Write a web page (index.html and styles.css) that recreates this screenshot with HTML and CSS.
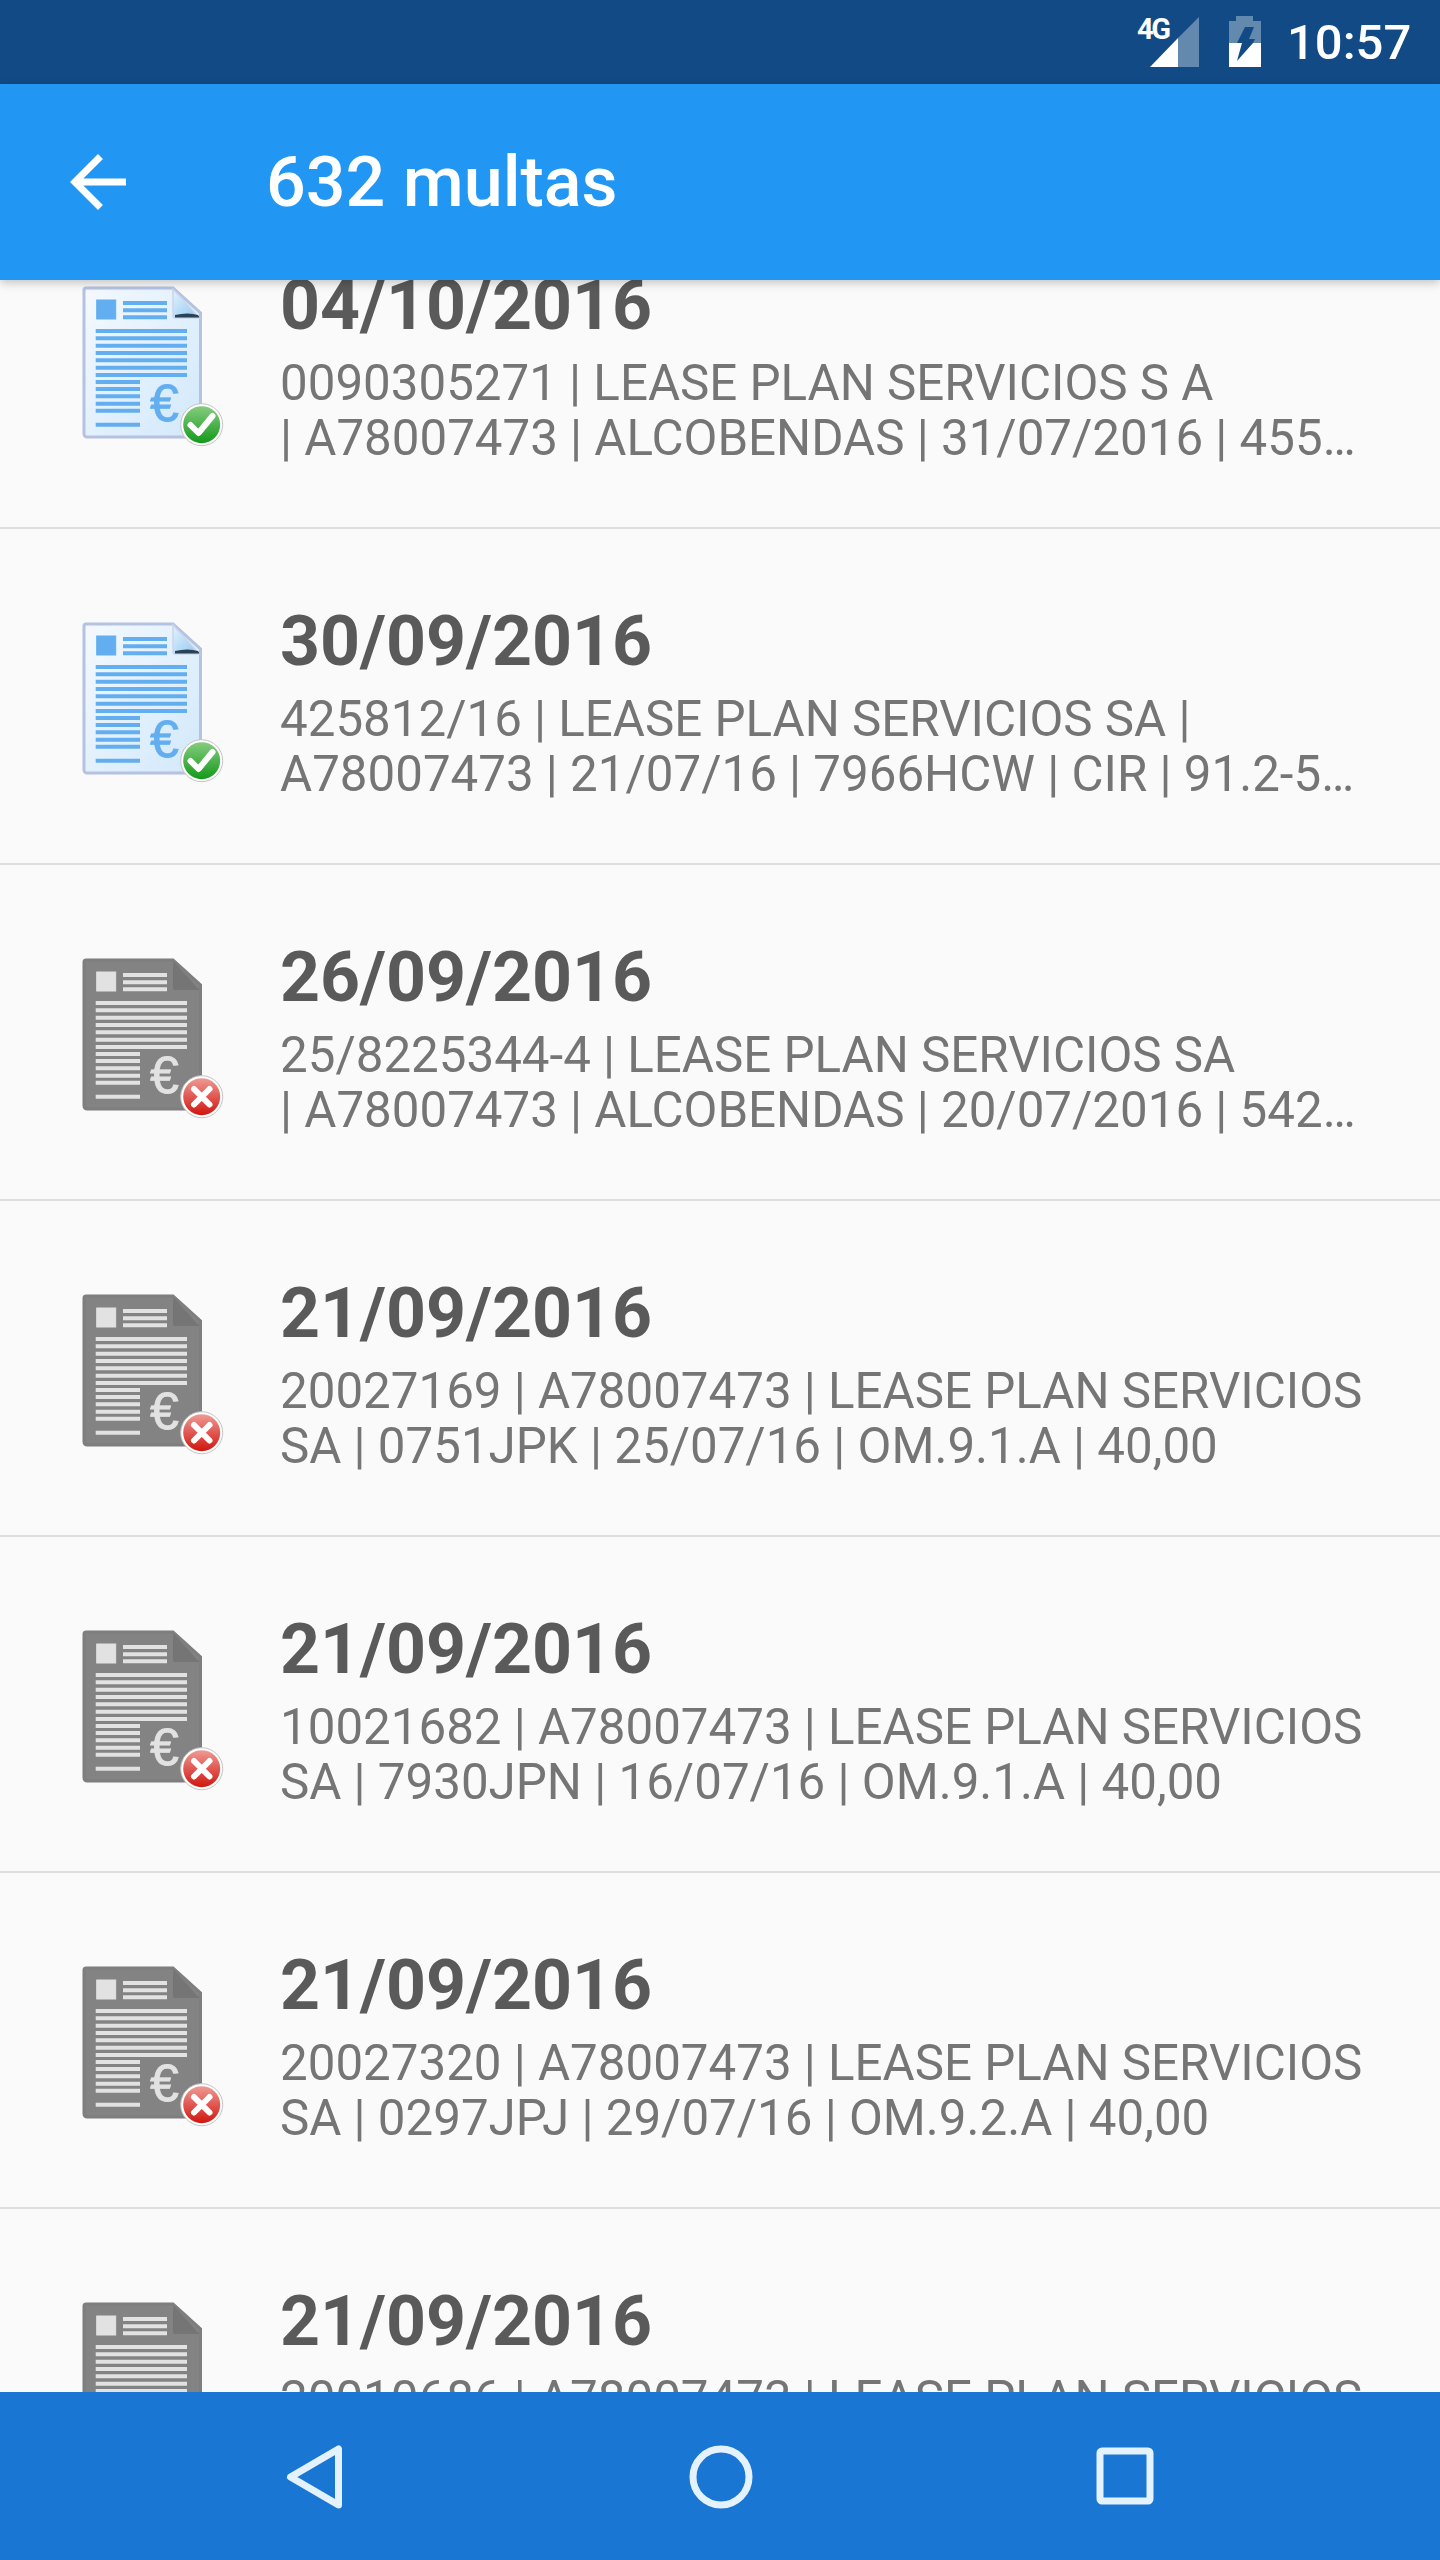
FILE: index.html
```html
<!DOCTYPE html>
<html lang="es">
<head>
<meta charset="utf-8">
<title>632 multas</title>
<link rel="stylesheet" href="styles.css">
</head>
<body>
<svg class="defs" width="0" height="0" aria-hidden="true">
  <defs>
    <linearGradient id="paper" x1="0" y1="0" x2="1" y2="1">
      <stop offset="0" stop-color="#f4f9fe"/><stop offset="1" stop-color="#d2e8fb"/>
    </linearGradient>
    <linearGradient id="fold" x1="0" y1="0" x2="1" y2="1">
      <stop offset="0" stop-color="#e4f3fd"/><stop offset="1" stop-color="#8fc6f0"/>
    </linearGradient>
    <linearGradient id="green" x1="0" y1="0" x2="0" y2="1">
      <stop offset="0" stop-color="#86cc7f"/><stop offset="1" stop-color="#139a1a"/>
    </linearGradient>
    <linearGradient id="red" x1="0" y1="0" x2="0" y2="1">
      <stop offset="0" stop-color="#f09a94"/><stop offset="1" stop-color="#d0160f"/>
    </linearGradient>
    <filter id="soft"><feGaussianBlur stdDeviation="0.6"/></filter>
    <symbol id="lines" viewBox="0 0 145 165">
      <rect x="16.7" y="16" width="19" height="19"/>
      <path class="bars bars-head" d="M43 19H87M43 26.3H87M43 33.3H87"/>
      <path class="bars" d="M15.7 47H107M15.7 54.3H107M15.7 61.7H107M15.7 69H107M15.7 76.3H107M15.7 83.7H107M15.7 91H107M15.7 98H60M15.7 105H60M15.7 112.3H60M15.7 119.7H60M15.7 126.7H60M15.7 140.7H60"/>
    </symbol>
    <symbol id="doc-ok" viewBox="0 0 145 165">
      <g filter="url(#soft)">
        <path class="ok-paper" d="M6 4H93L120.500 29V150a3 3 0 0 1-3 3H7a3 3 0 0 1-3-3V6a2 2 0 0 1 2-2Z"/>
        <path class="ok-fold" d="M93 5V32a2 2 0 0 0 2 2H119.500Z"/>
        <path class="ok-crease" d="M95 31Q108 28 118 31L119.500 33.500H95Z"/>
        <use href="#lines" class="ok-lines" width="145" height="165"/>
      </g>
      <text class="euro ok-euro" x="70" y="137">€</text>
      <circle class="ring" cx="121.7" cy="140.7" r="21"/>
      <circle cx="121.7" cy="140.7" r="18.500" fill="url(#green)"/>
      <path class="mark mark-ok" d="M110.500 141l8 8 14-17"/>
    </symbol>
    <symbol id="doc-no" viewBox="0 0 145 165">
      <g filter="url(#soft)">
        <path class="no-paper" d="M6 4H93L120.500 29V150a3 3 0 0 1-3 3H7a3 3 0 0 1-3-3V6a2 2 0 0 1 2-2Z"/>
        <path class="no-fold" d="M93 5V32a2 2 0 0 0 2 2H119.500Z"/>
        <use href="#lines" class="no-lines" width="145" height="165"/>
      </g>
      <text class="euro no-euro" x="70" y="137">€</text>
      <circle class="ring" cx="121.7" cy="140.7" r="21"/>
      <circle cx="121.7" cy="140.7" r="18.500" fill="url(#red)"/>
      <path class="mark" d="M114 133l15.500 15.500M129.500 133L114 148.500"/>
    </symbol>
  </defs>
</svg>

<div class="screen">
  <header class="status">
    <span class="net">4G</span>
    <svg class="signal" width="50" height="50" viewBox="0 0 50 50" aria-hidden="true">
      <path class="dim" d="M50 0V50H29V21Z"/>
      <path class="full" d="M29 21V50H1Z"/>
    </svg>
    <svg class="battery" width="34" height="52" viewBox="0 0 34 52" aria-hidden="true">
      <path class="dim" d="M8 0H25V5H33V27H1V5H8Z"/>
      <path class="full" d="M1 27H33V51H1Z"/>
      <path class="bolt-top" d="M17 11H26L21 23H27L25 27H9Z"/>
      <path class="bolt-bottom" d="M11 27H25L9 45L14 27Z"/>
    </svg>
    <span class="clock">10:57</span>
  </header>

  <div class="appbar">
    <svg class="back" width="84" height="84" viewBox="0 0 24 24" aria-hidden="true">
      <path d="M20 11H7.830l5.590-5.590L12 4l-8 8 8 8 1.410-1.410L7.830 13H20v-2z"/>
    </svg>
    <h1 class="title">632 multas</h1>
  </div>

  <main class="viewport">
    <ul class="list">
      <li class="row">
        <svg class="doc" width="145" height="165"><use href="#doc-ok"/></svg>
        <div class="info"><div class="date">04/10/2016</div><p class="desc"><span class="line">0090305271 | LEASE PLAN SERVICIOS S A</span><span class="line line-cut">| A78007473 | ALCOBENDAS | 31/07/2016 | 4550HZX | CIR | 50,2-1 | 200,00</span></p></div>
      </li>
      <li class="row">
        <svg class="doc" width="145" height="165"><use href="#doc-ok"/></svg>
        <div class="info"><div class="date">30/09/2016</div><p class="desc"><span class="line">425812/16 | LEASE PLAN SERVICIOS SA |</span><span class="line line-cut">A78007473 | 21/07/16 | 7966HCW | CIR | 91.2-5A | 200,00</span></p></div>
      </li>
      <li class="row">
        <svg class="doc" width="145" height="165"><use href="#doc-no"/></svg>
        <div class="info"><div class="date">26/09/2016</div><p class="desc"><span class="line">25/8225344-4 | LEASE PLAN SERVICIOS SA</span><span class="line line-cut">| A78007473 | ALCOBENDAS | 20/07/2016 | 5421JBD | CIR | 50,2-1 | 100,00</span></p></div>
      </li>
      <li class="row">
        <svg class="doc" width="145" height="165"><use href="#doc-no"/></svg>
        <div class="info"><div class="date">21/09/2016</div><p class="desc"><span class="line">20027169 | A78007473 | LEASE PLAN SERVICIOS</span><span class="line">SA | 0751JPK | 25/07/16 | OM.9.1.A | 40,00</span></p></div>
      </li>
      <li class="row">
        <svg class="doc" width="145" height="165"><use href="#doc-no"/></svg>
        <div class="info"><div class="date">21/09/2016</div><p class="desc"><span class="line">10021682 | A78007473 | LEASE PLAN SERVICIOS</span><span class="line">SA | 7930JPN | 16/07/16 | OM.9.1.A | 40,00</span></p></div>
      </li>
      <li class="row">
        <svg class="doc" width="145" height="165"><use href="#doc-no"/></svg>
        <div class="info"><div class="date">21/09/2016</div><p class="desc"><span class="line">20027320 | A78007473 | LEASE PLAN SERVICIOS</span><span class="line">SA | 0297JPJ | 29/07/16 | OM.9.2.A | 40,00</span></p></div>
      </li>
      <li class="row">
        <svg class="doc" width="145" height="165"><use href="#doc-no"/></svg>
        <div class="info"><div class="date">21/09/2016</div><p class="desc"><span class="line">20010686 | A78007473 | LEASE PLAN SERVICIOS</span><span class="line">SA | 0297JPJ | 29/07/16 | OM.9.2.A | 40,00</span></p></div>
      </li>
    </ul>
  </main>

  <nav class="navbar">
    <svg class="nav-icon" width="168" height="168" viewBox="0 0 168 168" aria-hidden="true"><path d="M106.500 57V113L58.500 85Z"/></svg>
    <svg class="nav-icon" width="168" height="168" viewBox="0 0 168 168" aria-hidden="true"><circle cx="84" cy="85" r="28"/></svg>
    <svg class="nav-icon" width="168" height="168" viewBox="0 0 168 168" aria-hidden="true"><rect x="58" y="59" width="50" height="50" rx="2"/></svg>
  </nav>
</div>
</body>
</html>
```
FILE: styles.css
```css
* { box-sizing: border-box; }
html, body { margin: 0; padding: 0; }
body { background: #fafafa; font-family: Roboto, "Liberation Sans", sans-serif; }
.defs { position: absolute; }

.screen { width: 1440px; height: 2560px; display: flex; flex-direction: column; overflow: hidden; }

.status { height: 84px; flex: none; background: #114a85; display: flex; align-items: flex-start; color: #fff; }
.net { margin: 15px 0 0 1137px; width: 30px; font-size: 29px; line-height: 28px; font-weight: 700; letter-spacing: -2.500px; }
.signal { margin: 17px 0 0 -18px; flex: none; }
.battery { margin: 16px 0 0 29px; flex: none; }
.clock { margin: 20px 0 0 25px; font-size: 49px; line-height: 46px; font-weight: 500; }
.dim { fill: #fff; fill-opacity: .35; }
.full { fill: #fff; }
.bolt-top { fill: #114a85; }
.bolt-bottom { fill: #114a85; }

.appbar { height: 196px; flex: none; background: #2196f3; display: flex; align-items: center; padding-left: 56px; position: relative; z-index: 2; box-shadow: 0 3px 9px rgba(0, 0, 0, .22); }
.back { fill: #fff; flex: none; }
.title { margin: 0 0 0 126px; font-size: 70px; line-height: 84px; font-weight: 500; color: #fff; }

.viewport { flex: 1; min-height: 0; overflow: hidden; }
.list { list-style: none; margin: -87px 0 0; padding: 0; }
.row { height: 336px; padding: 84px 70px 0 80px; display: flex; align-items: flex-start; border-bottom: 2px solid #dedede; }
.doc { flex: none; margin-top: 7px; }
.info { margin-left: 55px; min-width: 0; flex: 1; }
.date { font-size: 69.8px; line-height: 84px; font-weight: 700; color: #5a5a5a; margin-top: -14px; }
.desc { margin: 9px 0 0; font-size: 49.28px; line-height: 55px; color: #757575; }
.line { display: block; white-space: nowrap; }
.line-cut { overflow: hidden; text-overflow: ellipsis; }

.ok-paper { fill: url(#paper); stroke: #b6c2e2; stroke-width: 3; }
.ok-fold { fill: url(#fold); stroke: #c9d6ec; stroke-width: 1.500; }
.ok-crease { fill: #2c3f55; }
.ok-lines { fill: #62aef0; stroke: #62aef0; }
.no-paper { fill: #838383; stroke: #7e7e7e; stroke-width: 3; }
.no-fold { fill: #747474; }
.no-lines { fill: #e2e2e2; stroke: #e2e2e2; }
.bars { fill: none; stroke-width: 4; }
.euro { font-family: "Liberation Sans", sans-serif; font-size: 52px; stroke-width: .8px; }
.ok-euro { fill: #62aef0; stroke: #62aef0; }
.no-euro { fill: #e2e2e2; stroke: #e2e2e2; }
.ring { fill: #fff; stroke: #c4c4c4; stroke-width: 1; }
.mark { fill: none; stroke: #fff; stroke-width: 6; stroke-linecap: round; stroke-linejoin: round; }

.navbar { height: 168px; flex: none; background: #1976d2; display: flex; justify-content: center; gap: 237px; padding-left: 2px; position: relative; z-index: 2; }
.nav-icon { fill: none; stroke: #e3f2fd; stroke-width: 7; stroke-linejoin: round; flex: none; }
```
